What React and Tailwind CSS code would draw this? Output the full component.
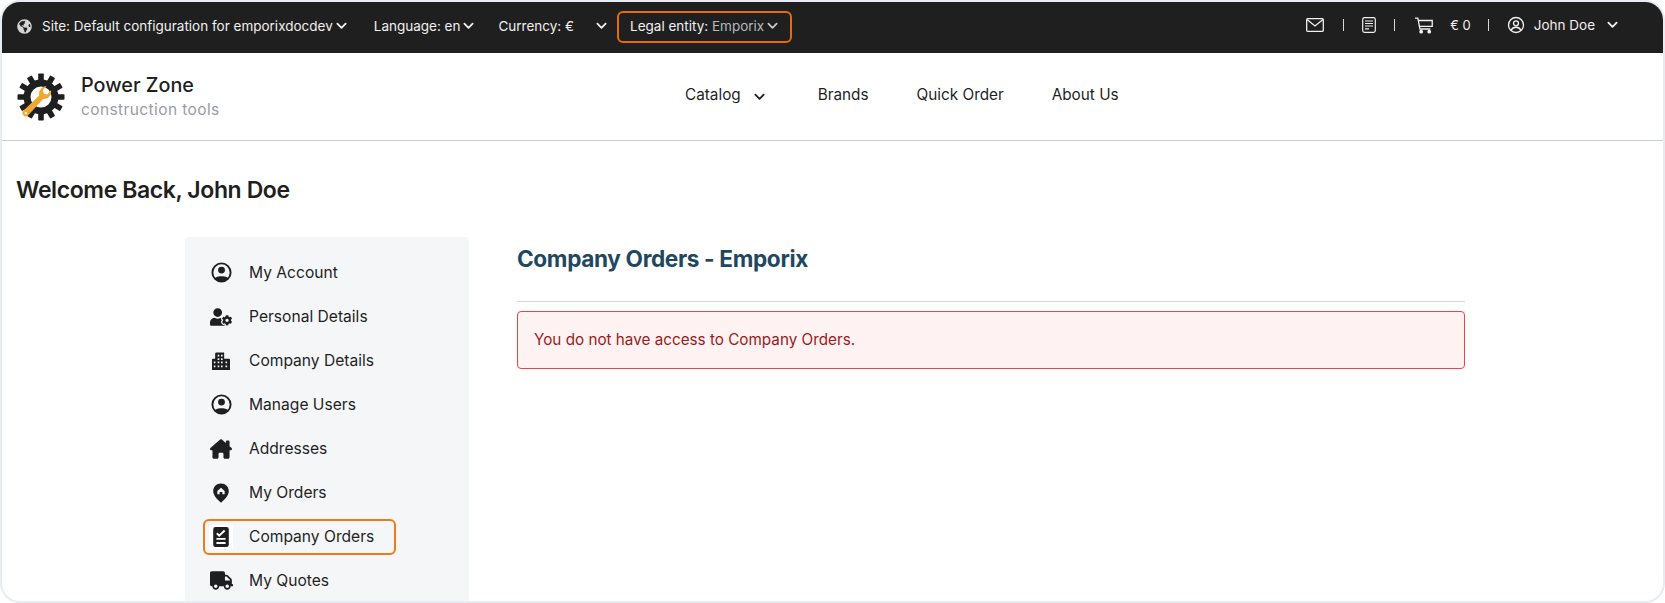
import React from "react";
import { FaGlobeAmericas, FaUserCog, FaTruck } from "react-icons/fa";
import { FaHouseChimney } from "react-icons/fa6";

const Chevron = ({ className = "" }) => (
  <svg viewBox="0 0 12 8" className={"w-[11px] h-[8px] " + className} fill="none" stroke="currentColor" strokeWidth="2" strokeLinecap="round" strokeLinejoin="round">
    <path d="M1.5 1.5 6 6l4.5-4.5" />
  </svg>
);

const Account = ({ className = "" }) => (
  <svg viewBox="0 0 24 24" className={className}>
    <defs>
      <clipPath id="acc"><circle cx="12" cy="12" r="9.5" /></clipPath>
    </defs>
    <circle cx="12" cy="12" r="9.5" fill="none" stroke="currentColor" strokeWidth="2" />
    <circle cx="12" cy="9.5" r="3.6" fill="currentColor" />
    <path d="M3 24v-3c1-3.6 5-5 9-5s8 1.400 9 5v3z" fill="currentColor" clipPath="url(#acc)" />
  </svg>
);

const AccountLine = ({ className = "" }) => (
  <svg viewBox="0 0 24 24" className={className} fill="none" stroke="currentColor" strokeWidth="1.800">
    <circle cx="12" cy="12" r="10" />
    <circle cx="12" cy="9.800" r="3.300" />
    <path d="M5.500 19c1.200-2.800 3.700-4 6.500-4s5.300 1.200 6.500 4" />
  </svg>
);

const Buildings = ({ className = "" }) => (
  <svg viewBox="0 0 20 20" className={className}>
    <path fill="currentColor" fillRule="evenodd" d="M5 0.500h8.500v7H19a1 1 0 0 1 1 1V20H0V8.500a1 1 0 0 1 1-1h2.500V2a1.500 1.500 0 0 1 1.500-1.500zM6.300 3v2h1.800V3zM10 3v2h1.800V3zM6.300 7v2h1.800V7zM10 7v2h1.800V7zM2 10.500v2h1.800v-2zM6.300 10.500v2h1.800v-2zM10 10.500v2h1.800v-2zM15 10.500v2h1.800v-2zM2 15v2h1.800v-2zM6.300 15v2h1.800v-2zM10 15v2h1.800v-2zM15 15v2h1.800v-2z" />
  </svg>
);

const Pin = ({ className = "" }) => (
  <svg viewBox="0 0 24 24" className={className}>
    <path fill="currentColor" fillRule="evenodd" d="M12 1.500c5 0 8.500 3.700 8.500 8.300 0 5-4.800 9.700-8.500 12.700-3.700-3-8.500-7.700-8.500-12.700 0-4.600 3.500-8.300 8.500-8.300zM12 6.300 8 9.800v3.500h2.500v-2.500h3v2.500H16V9.800z" />
  </svg>
);

const Clipboard = ({ className = "" }) => (
  <svg viewBox="0 0 24 24" className={className}>
    <path fill="currentColor" d="M6 1h12a2.500 2.500 0 0 1 2.500 2.500v17A2.500 2.500 0 0 1 18 23H6a2.500 2.500 0 0 1-2.500-2.500v-17A2.500 2.500 0 0 1 6 1z" />
    <path d="M7.500 8 10 10.500 16 5" fill="none" stroke="#fff" strokeWidth="2.200" />
    <path d="M7 14h10M7 18.500h10" fill="none" stroke="#fff" strokeWidth="2" />
  </svg>
);

const Mail = ({ className = "" }) => (
  <svg viewBox="0 0 18 14" className={className} fill="none" stroke="currentColor" strokeWidth="1.300">
    <rect x="0.700" y="0.700" width="16.600" height="12.600" rx="1" />
    <path d="M1 1.500 9 8l8-6.500" />
  </svg>
);

const Doc = ({ className = "" }) => (
  <svg viewBox="0 0 14 16" className={className} fill="none" stroke="currentColor" strokeWidth="1.200">
    <rect x="0.700" y="0.700" width="12.600" height="14.600" rx="1.800" />
    <path d="M3 4h8M3 6.500h8M3 9h8M3 11.800h4" />
  </svg>
);

const Cart = ({ className = "" }) => (
  <svg viewBox="0 0 19 17" className={className} fill="none" stroke="currentColor" strokeWidth="1.400">
    <path d="M0 .7h3l2.200 11.500h11" />
    <path d="M3.600 3.200h14.600v6.300H4.800" />
    <circle cx="6.500" cy="15" r="1.300" fill="currentColor" />
    <circle cx="15" cy="15" r="1.300" fill="currentColor" />
  </svg>
);

const Logo = () => {
  const teeth = [0, 30, 60, 90, 120, 150, 180, 210, 240, 270, 300, 330];
  return (
    <svg viewBox="0 0 48 48" className="w-12 h-12 shrink-0">
      <g fill="#1f1f1f">
        {teeth.map((a) => (
          <rect key={a} x="21.200" y="0.500" width="5.600" height="9" rx="0.800" transform={`rotate(${a} 24 24)`} />
        ))}
      </g>
      <circle cx="24" cy="24" r="14" fill="none" stroke="#1f1f1f" strokeWidth="7" />
      <path d="M34 17c1.200 4.500-2.500 9.500-7.800 9L11 42.500a3.200 3.200 0 0 1-4.600-.3 3.200 3.200 0 0 1 .2-4.600L22.200 22.500c-1-4.800 2.300-9 7.300-9.500l-3.700 4.200 1.200 3.500 3.500.8z" fill="#f0a92e" />
      <circle cx="8.800" cy="40" r="1.200" fill="#fff" />
    </svg>
  );
};

const Sep = ({ className = "" }) => <span className={"block w-px h-[12px] bg-[#d8d8d8] " + className} />;

const menu = [
  { label: "My Account", Icon: Account, cls: "w-[23px] h-[23px]" },
  { label: "Personal Details", Icon: FaUserCog, cls: "w-[22px] h-[18px]" },
  { label: "Company Details", Icon: Buildings, cls: "w-[18px] h-[18px]" },
  { label: "Manage Users", Icon: Account, cls: "w-[23px] h-[23px]" },
  { label: "Addresses", Icon: FaHouseChimney, cls: "w-[22px] h-[20px]" },
  { label: "My Orders", Icon: Pin, cls: "w-[22px] h-[22px]" },
  { label: "Company Orders", Icon: Clipboard, cls: "w-[22px] h-[22px]", active: true },
  { label: "My Quotes", Icon: FaTruck, cls: "w-[23px] h-[19px]" },
];

export default function App() {
  return (
    <div className="w-full h-[603px] bg-white overflow-hidden font-['Inter',sans-serif] text-[#1f1f1f]">
      <div className="h-full border-2 border-[#e6ecf2] rounded-[20px] overflow-hidden flex flex-col">
        <header className="h-[51px] shrink-0 bg-[#1f1f1f] text-[#f0f0f0] flex items-start text-[13.500px] leading-[20px] pl-[15px] pr-[45px]">
          <div className="flex items-center h-[48px]">
            <FaGlobeAmericas className="w-[15px] h-[15px] mr-[10px] text-[#d4d4d4]" />
            <span>Site: Default configuration for emporixdocdev</span>
            <Chevron className="ml-[3px]" />
            <span className="ml-[27px]">Language: en</span>
            <Chevron className="ml-[3px]" />
            <span className="ml-[24px]">Currency: €</span>
            <Chevron className="ml-[22px]" />
            <div className="ml-[10px] mt-[2px] h-[32px] w-[175px] border-2 border-[#e46c0a] rounded-[6px] flex items-center pl-[11px] pb-[2px]">
              <span>Legal entity:&nbsp;</span>
              <span className="text-[#b8b8b8]">Emporix</span>
              <Chevron className="ml-[3px] text-[#c8c8c8]" />
            </div>
          </div>
          <div className="ml-auto flex items-center h-[46px]">
            <Mail className="w-[18px] h-[14px]" />
            <Sep className="ml-[19px]" />
            <Doc className="ml-[18px] w-[14px] h-[16px]" />
            <Sep className="ml-[18px]" />
            <Cart className="ml-[20px] w-[18px] h-[17px]" />
            <span className="ml-[17px] text-[13px]">€ 0</span>
            <Sep className="ml-[17px]" />
            <AccountLine className="ml-[18px] w-[18px] h-[18px]" />
            <span className="ml-[9px] text-[13.500px]">John Doe</span>
            <Chevron className="ml-[12px]" />
          </div>
        </header>

        <nav className="h-[88px] shrink-0 bg-white border-b border-[#c9ced6] flex items-center pl-[15px]">
          <Logo />
          <div className="ml-[16px] w-[180px]">
            <div className="text-[19.800px] leading-[26px] font-medium">Power Zone</div>
            <div className="text-[15.500px] leading-[22px] text-[#9a9ca8] tracking-[0.400px] pt-[1px]">construction tools</div>
          </div>
          <div className="ml-[424px] flex items-center text-[15.300px] -mt-[3px]">
            <span>Catalog</span>
            <Chevron className="ml-[13px] mt-[3px]" />
            <span className="ml-[53px]">Brands</span>
            <span className="ml-[48px]">Quick Order</span>
            <span className="ml-[48px]">About Us</span>
          </div>
        </nav>

        <main className="flex-1 min-h-0 flex flex-col">
          <h1 className="mt-[33px] ml-[14px] text-[23px] leading-[32px] font-semibold tracking-[-0.400px]">Welcome Back, John Doe</h1>
          <div className="mt-[31px] flex items-start">
            <aside className="ml-[183px] w-[284px] h-[400px] shrink-0 bg-[#f5f6f8] rounded-t-[4px] pt-[13.500px] pl-[18px] pr-[73px]">
              {menu.map(({ label, Icon, cls, active }) => (
                <div
                  key={label}
                  className={
                    "h-[44px] flex items-center text-[15.600px] " +
                    (active ? "relative" : "")
                  }
                >
                  {active && (
                    <span className="absolute left-0 top-[4px] w-[193px] h-[36px] border-2 border-[#ee7a1c] rounded-[6px]" />
                  )}
                  <span className={"ml-[6px] w-[24px] h-[24px] flex items-center justify-center shrink-0 " + (active ? "bg-white" : "")}>
                    <Icon className={cls} />
                  </span>
                  <span className="ml-[16px] whitespace-nowrap">{label}</span>
                </div>
              ))}
            </aside>
            <section className="ml-[48px] w-[948px]">
              <h2 className="text-[22.600px] leading-[32px] font-bold tracking-[-0.350px] text-[#1f4860] mt-[6px]">Company Orders - Emporix</h2>
              <div className="mt-[26px] h-px bg-[#d8d8d8]" />
              <div className="mt-[9px] h-[58px] border border-[#ef4444] rounded-[4px] bg-[#fef2f2] flex items-center pl-[16px] pt-[1px] text-[15.250px] text-[#991b1b]">
                You do not have access to Company Orders.
              </div>
            </section>
          </div>
        </main>
      </div>
    </div>
  );
}
